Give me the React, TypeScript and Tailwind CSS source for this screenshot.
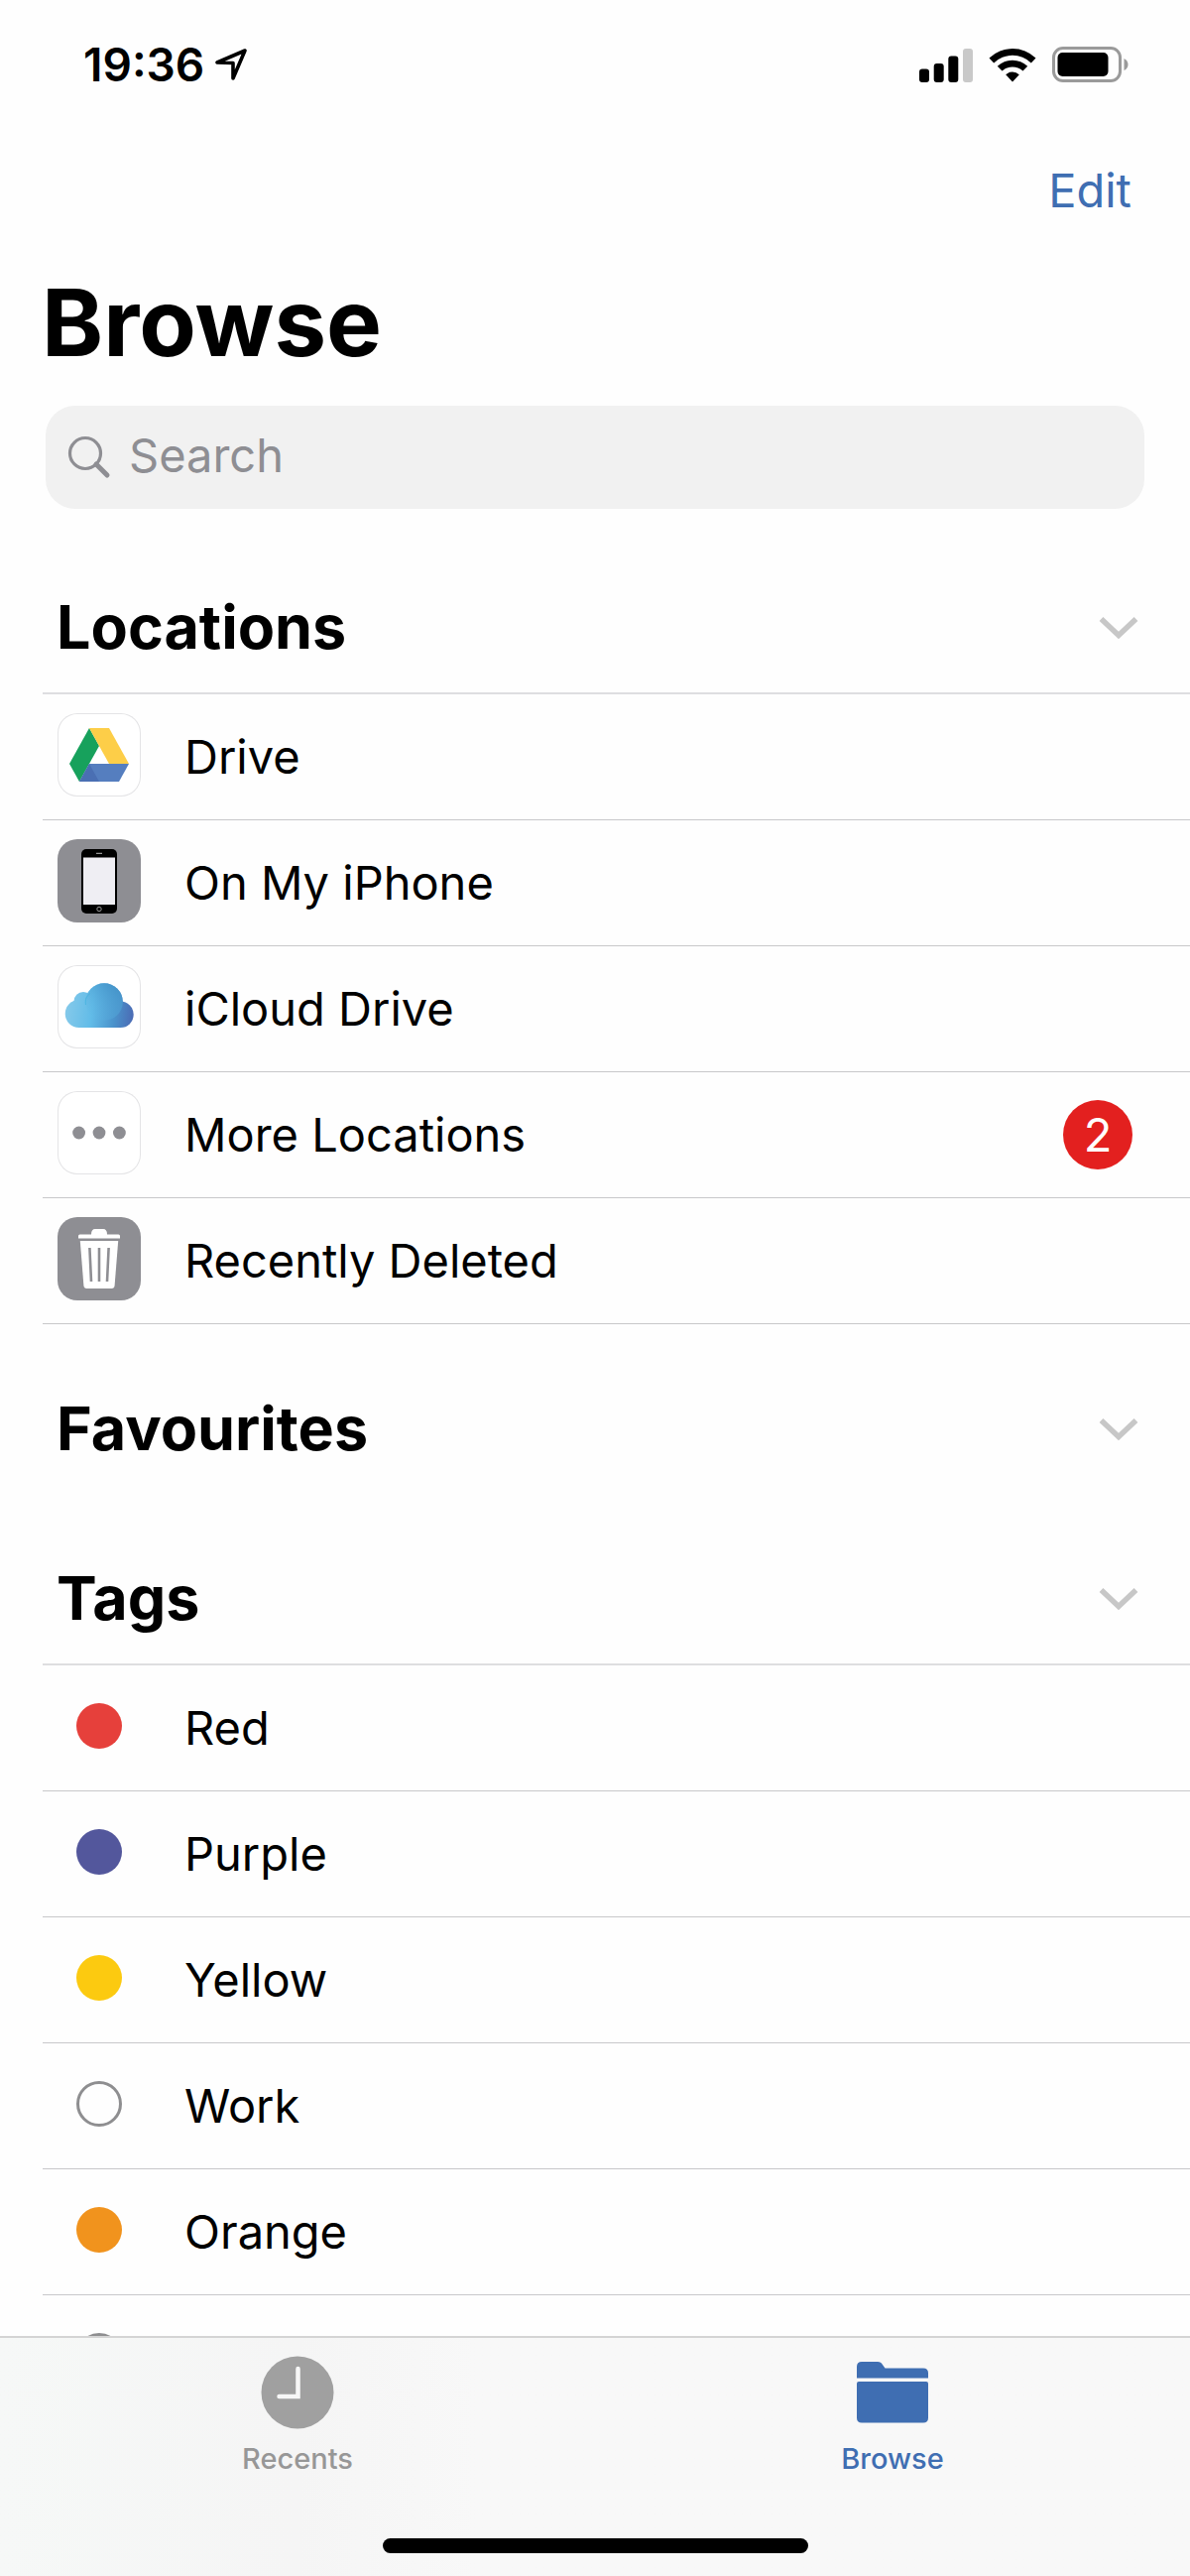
import React, { useState } from 'react';

const locations = [
  { id: 'drive', name: 'Drive', icon: DriveIcon, filled: false, badge: 0 },
  { id: 'phone', name: 'On My iPhone', icon: PhoneIcon, filled: true, badge: 0 },
  { id: 'icloud', name: 'iCloud Drive', icon: CloudIcon, filled: false, badge: 0 },
  { id: 'more', name: 'More Locations', icon: MoreIcon, filled: false, badge: 2 },
  { id: 'deleted', name: 'Recently Deleted', icon: TrashIcon, filled: true, badge: 0 }
];

const tags = [
  { id: 'red', name: 'Red', color: 'bg-[#e6403b]' },
  { id: 'purple', name: 'Purple', color: 'bg-[#53579c]' },
  { id: 'yellow', name: 'Yellow', color: 'bg-[#fcca10]' },
  { id: 'work', name: 'Work', color: 'border-3 border-[#8e8e90]' },
  { id: 'orange', name: 'Orange', color: 'bg-[#f1931d]' },
  { id: 'untitled', name: '', color: 'border-3 border-[#8e8e90]' }
];

function DriveIcon() {
  return (
    <svg viewBox="0 0 84 84" className="w-full h-full">
      <path d="M32 15 L42 33 L22 69 L12 51 Z" fill="#17a15c" />
      <path d="M32 15 H52 L72 51 H52 Z" fill="#fdce48" />
      <path d="M32 51 H72 L62 69 H22 Z" fill="#557ebf" />
      <path d="M32 51 L42 69 H22 Z" fill="#4a6fb3" />
    </svg>
  );
}

function PhoneIcon() {
  return (
    <svg viewBox="0 0 84 84" className="w-full h-full">
      <rect x="24" y="10" width="36" height="65" rx="5" fill="#000" />
      <rect x="26" y="18.5" width="32" height="47.5" fill="#efeef3" />
      <path d="M39 14.3 H45" stroke="#bbb" strokeWidth="1" />
      <circle cx="42" cy="70.5" r="2.2" fill="none" stroke="#bbb" strokeWidth="0.8" />
    </svg>
  );
}

function CloudIcon() {
  return (
    <svg viewBox="0 0 84 84" className="w-full h-full">
      <defs>
        <linearGradient id="cloud" gradientUnits="userSpaceOnUse" x1="8" y1="46" x2="77" y2="54">
          <stop offset="0" stopColor="#84c9ea" />
          <stop offset="0.38" stopColor="#62bce8" />
          <stop offset="0.72" stopColor="#4a92cb" />
          <stop offset="1" stopColor="#4b69b3" />
        </linearGradient>
        <linearGradient id="puff" gradientUnits="userSpaceOnUse" x1="30" y1="55" x2="60" y2="20">
          <stop offset="0" stopColor="#62bce8" stopOpacity="0" />
          <stop offset="1" stopColor="#4493c9" />
        </linearGradient>
      </defs>
      <g fill="url(#cloud)">
        <circle cx="47" cy="37" r="18.8" />
        <circle cx="26" cy="36.5" r="9.5" />
        <circle cx="21.7" cy="49" r="14" />
        <circle cx="63.5" cy="49.8" r="13.2" />
        <rect x="21" y="36" width="43" height="27" />
      </g>
      <circle cx="47" cy="37" r="18.8" fill="url(#puff)" />
      <path d="M28.5 40 C27.5 34 29.5 31 33 28.5" fill="none" stroke="#3fb0de" strokeWidth="1" opacity="0.7" />
    </svg>
  );
}

function MoreIcon() {
  return (
    <svg viewBox="0 0 84 84" className="w-full h-full" fill="#8e8e93">
      <circle cx="21.6" cy="42" r="6.4" />
      <circle cx="42" cy="42" r="6.4" />
      <circle cx="62.4" cy="42" r="6.4" />
    </svg>
  );
}

function TrashIcon() {
  return (
    <svg viewBox="0 0 84 84" className="w-full h-full">
      <path d="M21 21.5 V19 Q21 17.5 22.5 17.5 H34 Q34 12 38 12 H46 Q50 12 50 17.5 H61.5 Q63 17.5 63 19 V21.5 Z" fill="#fff" />
      <path d="M22.8 24 H61.2 L57.6 69 Q57.3 72 54.5 72 H29.5 Q26.7 72 26.4 69 Z" fill="#fff" />
      <path d="M32.4 31 L34 65 M42 31 V65 M51.6 31 L50 65" stroke="#8e8e93" strokeWidth="2.6" />
    </svg>
  );
}

const StatusBar: React.FC = () => (
  <div className="flex items-center justify-between h-[130px] pl-[84px] pr-[62px]">
    <div className="flex items-center gap-2.5">
      <span className="text-[46px] font-semibold">19:36</span>
      <svg viewBox="0 0 34 34" className="w-[34px] h-[34px]" fill="none" stroke="#000" strokeWidth="3.6" strokeLinejoin="round">
        <path d="M31 3 L3 15 L19 15.5 L19 31 Z" />
      </svg>
    </div>
    <div className="flex items-center gap-4">
      <svg viewBox="0 0 54 35" className="w-[54px] h-[35px]">
        <rect x="0" y="21.5" width="10" height="13.5" rx="3" />
        <rect x="14.7" y="16" width="10" height="19" rx="3" />
        <rect x="29.3" y="8.5" width="10" height="26.5" rx="3" />
        <rect x="44" y="1" width="10" height="34" rx="3" fill="#c9c9c9" />
      </svg>
      <svg viewBox="0 0 48 35" className="w-[48px] h-[35px]">
        <path d="M0.5 10.5 A34 34 0 0 1 47.5 10.5 L42.8 15.4 A27 27 0 0 0 5.2 15.4 Z" />
        <path d="M8.8 18.8 A22 22 0 0 1 39.2 18.8 L34.5 23.6 A15.3 15.3 0 0 0 13.5 23.6 Z" />
        <path d="M17.2 27.2 A9.8 9.8 0 0 1 30.8 27.2 L24 34.5 Z" />
      </svg>
      <svg viewBox="0 0 77 36" className="w-[77px] h-[36px]">
        <rect x="1.5" y="1.5" width="67" height="33" rx="9.5" fill="none" stroke="#9a9a9a" strokeWidth="3" />
        <rect x="5.5" y="6" width="51" height="24" rx="5" />
        <path d="M72.5 12 Q76.5 14 76.5 18 Q76.5 22 72.5 24 Z" fill="#9a9a9a" />
      </svg>
    </div>
  </div>
);

type SectionProps = {
  title: string;
  open: boolean;
  onToggle: () => void;
  children?: React.ReactNode;
};

const Section: React.FC<SectionProps> = ({ title, open, onToggle, children }) => (
  <section className="mt-10">
    <div className="flex items-center justify-between h-[131px] pl-[57px] pr-[52px]">
      <h2 className="text-[61px] font-bold">{title}</h2>
      <button onClick={onToggle} aria-label={title} aria-expanded={open}>
        <svg viewBox="0 0 40 24" className="w-10 h-6" fill="none" stroke="#c7c7c7" strokeWidth="5.5">
          <path d="M2.5 3 L20 19.5 L37.5 3" />
        </svg>
      </button>
    </div>
    {open && children && <ul className="ml-[43px] border-t-2 border-[#dedee0]">{children}</ul>}
  </section>
);

const Row: React.FC<{ name: string; badge?: number; children: React.ReactNode }> = ({ name, badge, children }) => (
  <li className="h-[127px] border-b border-[#c8c8ca]">
    <button className="flex items-center w-full h-full pl-[15px] pr-[58px] text-left">
      <span className="flex items-center justify-center w-[84px] mr-[44px] pb-1">{children}</span>
      <span className="flex-1 text-[47px]">{name}</span>
      {badge ? (
        <span className="flex items-center justify-center w-[70px] h-[70px] rounded-full bg-[#e3201f] text-white text-[47px]">
          {badge}
        </span>
      ) : null}
    </button>
  </li>
);

const App: React.FC = () => {
  const [query, setQuery] = useState('');
  const [activeTab, setActiveTab] = useState('browse');
  const [closed, setClosed] = useState<string[]>([]);

  const toggle = (id: string) => {
    setClosed(closed.includes(id) ? closed.filter(c => c !== id) : [...closed, id]);
  };

  return (
    <div className="flex flex-col h-screen bg-[#fefefe] text-black font-['Inter',sans-serif]">
      <main className="flex-1 min-h-0 overflow-y-auto [scrollbar-width:none]">
        <StatusBar />

        <div className="flex items-center justify-end h-[124px] pr-[59px]">
          <button className="text-[47px] text-[#3f6eb2]">Edit</button>
        </div>

        <h1 className="pl-[42px] text-[94px] leading-[142px] font-bold">Browse</h1>

        {/* Search */}
        <label className="flex items-center gap-[18px] h-[104px] mx-[46px] mt-[13px] mb-[54px] pl-[22px] rounded-[30px] bg-[#f1f1f1]">
          <svg viewBox="0 0 44 44" className="w-11 h-11" fill="none" stroke="#8e8e93">
            <circle cx="18" cy="18" r="15.5" strokeWidth="3.2" />
            <path d="M29 29 L40 40" strokeWidth="5" strokeLinecap="round" />
          </svg>
          <input
            type="text"
            aria-label="Search"
            placeholder="Search"
            value={query}
            onChange={e => setQuery(e.target.value)}
            className="flex-1 pb-1 text-[47px] outline-none placeholder:text-[#8e8e93]"
          />
        </label>

        <Section title="Locations" open={!closed.includes('locations')} onToggle={() => toggle('locations')}>
          {locations.map(({ id, name, icon: Icon, filled, badge }) => (
            <Row key={id} name={name} badge={badge}>
              <span className={`w-[84px] h-[84px] rounded-[20px] overflow-hidden ${filled ? 'bg-[#8e8e93]' : 'bg-white ring-1 ring-inset ring-[#e4e4e6]'}`}>
                <Icon />
              </span>
            </Row>
          ))}
        </Section>

        <Section title="Favourites" open={!closed.includes('favourites')} onToggle={() => toggle('favourites')} />

        <Section title="Tags" open={!closed.includes('tags')} onToggle={() => toggle('tags')}>
          {tags.map(tag => (
            <Row key={tag.id} name={tag.name}>
              <span className={`w-[46px] h-[46px] rounded-full ${tag.color}`}></span>
            </Row>
          ))}
        </Section>
      </main>

      {/* Tab bar */}
      <nav className="border-t-2 border-[#d4d4d4] bg-[#f8f8f8] bg-linear-to-r from-[#f6f8f7] via-[#f5f5f5] via-25% to-[#f8f8f8] to-40%">
        <div className="flex h-[202px] pt-[18px]">
          <button
            onClick={() => setActiveTab('recents')}
            className={`flex-1 flex flex-col items-center gap-2.5 ${activeTab === 'recents' ? 'text-[#3f6eb2]' : 'text-[#979797]'}`}
          >
            <svg viewBox="0 0 74 74" className="w-[74px] h-[74px]">
              <circle cx="37" cy="37" r="36.5" fill={activeTab === 'recents' ? '#3f6eb2' : '#a0a0a0'} />
              <path d="M37.5 13 V41 H18.5" fill="none" stroke="#f7f7f7" strokeWidth="4.5" strokeLinecap="round" />
            </svg>
            <span className="text-[29px] leading-[40px] font-medium">Recents</span>
          </button>
          <button
            onClick={() => setActiveTab('browse')}
            className={`flex-1 flex flex-col items-center gap-2.5 ${activeTab === 'browse' ? 'text-[#3f6eb2]' : 'text-[#979797]'}`}
          >
            <svg viewBox="0 0 74 74" className="w-[74px] h-[74px]" fill="currentColor">
              <path d="M1 22.5 V11 Q1 6 6 6 H22 Q25.5 6 27 9 L29.5 12.5 H68 Q73 12.5 73 17.5 V22.5 Z" />
              <path d="M1 28 Q1 26 3 26 H71 Q73 26 73 28 V62.5 Q73 67.5 68 67.5 H6 Q1 67.5 1 62.5 Z" />
            </svg>
            <span className="text-[29px] leading-[40px] font-medium">Browse</span>
          </button>
        </div>
        <div className="w-[429px] h-[15px] mx-auto mb-[23px] rounded-full bg-black"></div>
      </nav>
    </div>
  );
};

export default App;
